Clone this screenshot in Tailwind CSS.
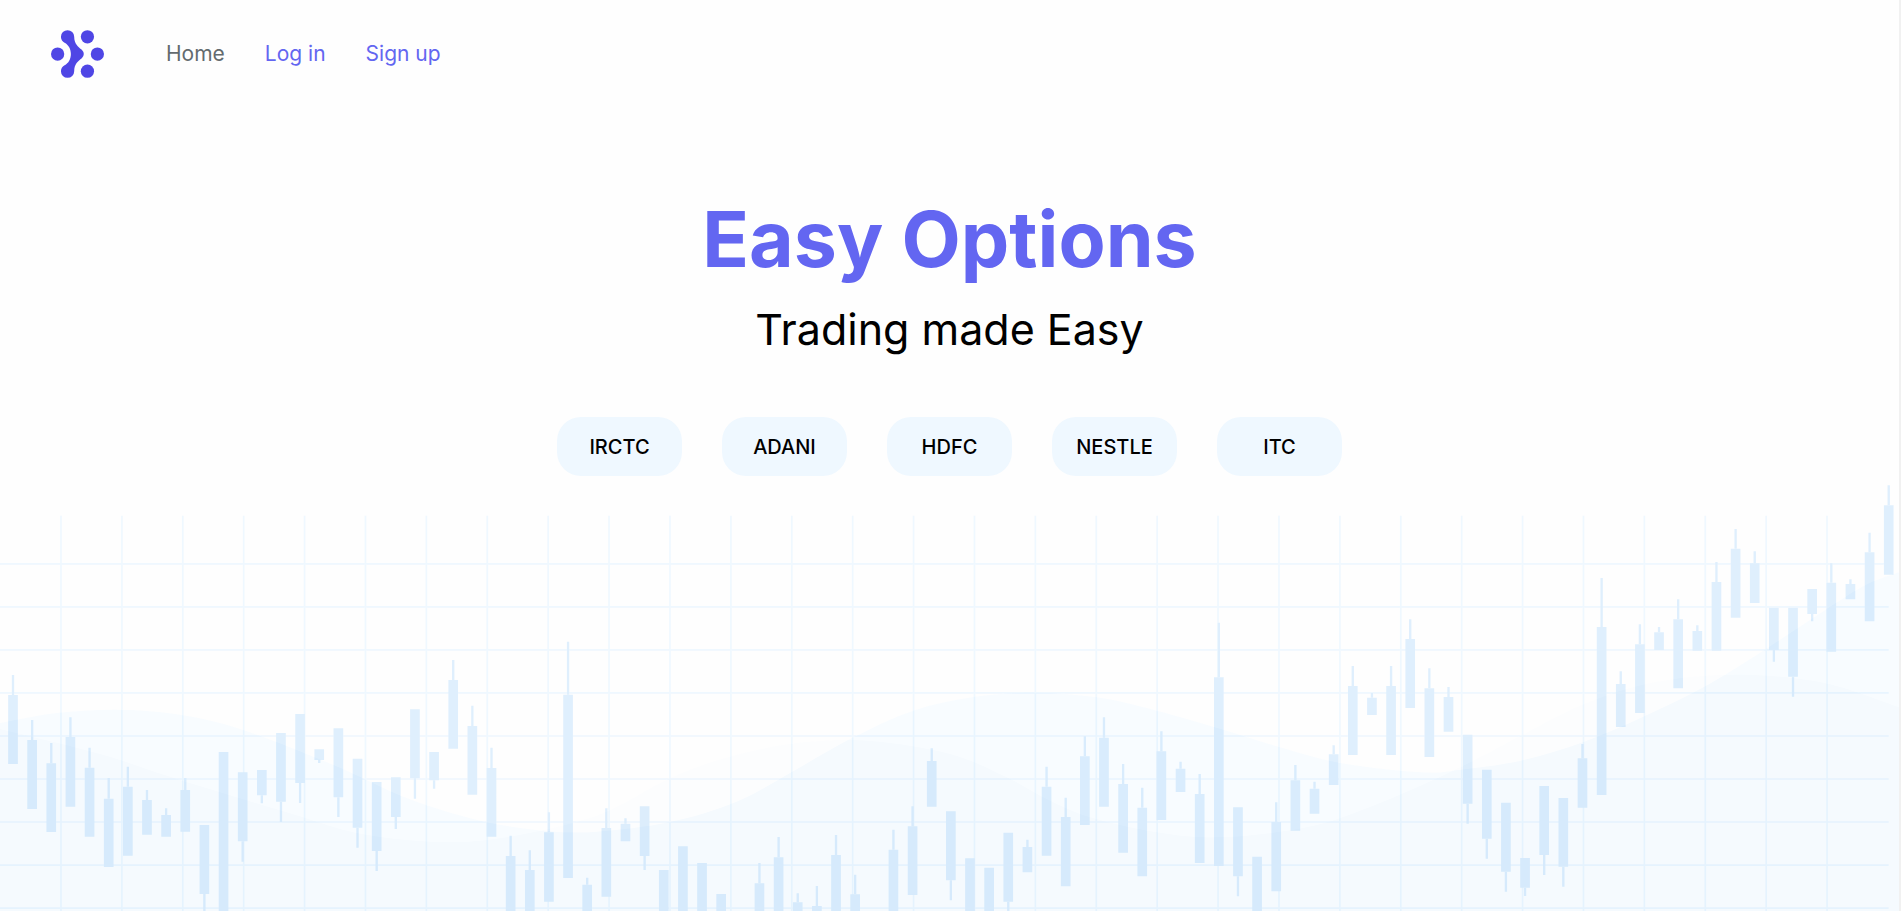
<!DOCTYPE html>
<html lang="en">
<head>
<meta charset="utf-8">
<meta name="viewport" content="width=device-width, initial-scale=1">
<title>Easy Options</title>
<script src="https://cdn.jsdelivr.net/npm/@tailwindcss/browser@4"></script>
</head>
<body class="bg-[#fefefe] font-[Inter,'Liberation_Sans',sans-serif] text-black">
<div class="relative isolate flex min-h-screen flex-col overflow-hidden border-r-2 border-[#f1f1f1]">

  <!-- Decorative candlestick chart -->
  <svg class="absolute bottom-0 left-0 -z-10 w-full" viewBox="0 3 5697 1293" fill="none" aria-hidden="true">
    <path id="grid" stroke="#e6f4ff" stroke-width="5" opacity=".65"/>
    <path id="wicks" stroke="#dfeffd" stroke-width="7"/>
    <path id="bodies" fill="#dfeffd"/>
    <path id="wave-back" class="mix-blend-multiply" fill="#fcfdfe"/>
    <path id="wave-front" class="mix-blend-multiply" fill="#f8fcff"/>
  </svg>

  <header class="flex items-center gap-[62px] px-[51px] pt-[30px]">
    <a href="#" aria-label="Easy Options">
      <svg class="h-12 w-[53px]" viewBox="154 90 160 144" fill="#4f46e5" aria-hidden="true">
        <circle cx="174" cy="162" r="20"/>
        <circle cx="264" cy="110" r="20"/>
        <circle cx="294" cy="162" r="20"/>
        <circle cx="264" cy="214" r="20"/>
        <path d="M184 110A20 20 0 0 1 224 110C224 131 236 141 247 149Q253 155 253 162Q253 169 247 175C236 183 224 193 224 214A20 20 0 0 1 184 214C184 205 189 199 195 196C207 190 214 177 214 162C214 147 207 134 195 128C189 125 184 119 184 110Z"/>
      </svg>
    </a>
    <nav class="flex items-center gap-10 text-[21px] leading-7">
      <a href="#" class="text-[#636b6f]">Home</a>
      <a href="#" class="text-[#6366f1]">Log in</a>
      <a href="#" class="text-[#6366f1]">Sign up</a>
    </nav>
  </header>

  <main class="flex flex-col items-center pt-[113px] text-center">
    <h1 class="text-[77px] leading-24 font-bold text-[#6366f1]">Easy Options</h1>
    <p class="pt-3 text-[43px] leading-15">Trading made Easy</p>
    <div class="flex flex-wrap justify-center gap-10 pt-[58px]">
      <button type="button" class="h-[59px] w-[125px] rounded-3xl bg-[#eff8ff] text-xl font-medium">IRCTC</button>
      <button type="button" class="h-[59px] w-[125px] rounded-3xl bg-[#eff8ff] text-xl font-medium">ADANI</button>
      <button type="button" class="h-[59px] w-[125px] rounded-3xl bg-[#eff8ff] text-xl font-medium">HDFC</button>
      <button type="button" class="h-[59px] w-[125px] rounded-3xl bg-[#eff8ff] text-xl font-medium">NESTLE</button>
      <button type="button" class="h-[59px] w-[125px] rounded-3xl bg-[#eff8ff] text-xl font-medium">ITC</button>
    </div>
  </main>
</div>

<script>
// Each candle: [high, body top, body bottom, low]; null leaves a gap.
const up = (h, t, b) => [h, t, b, b];
const dn = (t, b, l) => [t, t, b, l];
const E = 1300;
const candles = [
  up(588,648,855), up(723,783,990), up(792,853,1059), up(715,774,983), up(806,866,1073),
  up(897,959,1164), up(863,923,1130), up(933,963,1067), up(988,1008,1073), up(897,933,1058),
  dn(1038,1245,1305), dn(819,E,E), dn(880,1087,1148), dn(873,949,973), dn(762,968,1029),
  dn(705,912,972), dn(811,843,852), dn(748,955,1014), dn(839,1046,1106), dn(909,1116,1176),
  dn(895,1014,1050), dn(691,898,959), dn(819,904,929), up(543,603,809), up(680,741,947),
  up(806,867,1073), up(1070,1131,E), up(1114,1173,E), up(1000,1060,1268), up(488,647,1197),
  up(1196,1217,E), up(988,1047,1253), up(1018,1034,1087), dn(982,1131,1173), dn(1173,E,E),
  dn(1102,E,E), dn(1152,E,E), dn(1245,E,E), null, up(1152,1213,E),
  up(1074,1135,E), up(1243,1270,E), up(1221,1281,E), up(1068,1128,E), up(1187,1246,E),
  null, up(1052,1112,E), up(982,1042,1248), up(808,846,983), dn(997,1204,1264),
  dn(1138,E,E), dn(1166,E,E), dn(1061,1268,E), up(1082,1104,1180), up(863,923,1130),
  up(956,1014,1222), up(772,832,1038), up(715,776,983), up(855,915,1121), up(926,986,1192),
  up(757,817,1023), up(848,869,939), up(885,945,1152), up(431,595,1161), dn(985,1192,1252),
  dn(1133,E,E), up(970,1029,1237), up(858,904,1055), up(908,929,1004), up(799,826,918),
  up(561,621,828), up(642,656,708), up(561,621,828), up(421,480,687), up(568,628,834),
  up(624,654,758), dn(767,974,1034), dn(872,1079,1139), dn(971,1178,1238), dn(1137,1226,1251),
  dn(921,1128,1188), dn(957,1163,1223), up(795,838,986), up(297,444,948), up(577,615,744),
  up(436,496,702), up(444,460,513), up(361,421,628), up(439,456,515), up(249,309,515),
  up(150,209,416), up(217,253,372), dn(386,513,548), dn(386,593,653), dn(330,405,427),
  up(253,311,518), up(301,315,361), up(161,220,427), up(19,79,287)
];
let bodies = '', wicks = '';
candles.forEach((c, i) => {
  if (!c) return;
  const x = 39 + 57.42 * i;
  bodies += `M${x - 14.5} ${c[1]}h29V${c[2]}h-29Z`;
  if (c[0] < c[1]) wicks += `M${x} ${c[0]}V${c[1]}`;
  if (c[3] > c[2]) wicks += `M${x} ${c[2]}V${c[3]}`;
});
let grid = '';
for (let i = 0; i < 30; i++) grid += `M${183 + 182.7 * i} 110V1300`;
for (let i = 0; i < 9; i++) grid += `M0 ${254.5 + 129.1 * i}H5666`;

// Smooth curve through the points, closed along the bottom edge.
function wave(p) {
  let d = `M${p[0]}`;
  for (let i = 0; i < p.length - 1; i++) {
    const a = p[i - 1] || p[i], b = p[i], c = p[i + 1], e = p[i + 2] || c;
    d += `C${b[0] + (c[0] - a[0]) / 6} ${b[1] + (c[1] - a[1]) / 6} ${c[0] - (e[0] - b[0]) / 6} ${c[1] - (e[1] - b[1]) / 6} ${c[0]} ${c[1]}`;
  }
  return d + 'V1300H0Z';
}
const set = (id, d) => document.getElementById(id).setAttribute('d', d);
set('grid', grid);
set('wicks', wicks);
set('bodies', bodies);
set('wave-front', wave([[0,732],[170,702],[350,692],[530,706],[720,750],[1000,858],[1220,957],[1440,1025],[1640,1056],[1790,1058],[2010,1029],[2210,968],[2377,878],[2560,775],[2740,695],[2920,654],[3100,641],[3290,655],[3470,695],[3670,752],[3840,805],[4020,852],[4263,880],[4383,872],[4563,845],[4753,788],[4933,712],[5123,618],[5313,500],[5503,375],[5603,315],[5697,280]]));
set('wave-back', wave([[0,750],[300,825],[530,900],[860,1000],[1070,1062],[1290,1088],[1500,1078],[1790,1010],[2010,898],[2200,830],[2410,790],[2610,786],[2850,825],[3020,895],[3140,960],[3270,1015],[3470,1060],[3660,1075],[3920,1045],[4120,980],[4350,880],[4563,770],[4753,675],[4963,610],[5203,587],[5463,610],[5697,685]]));
</script>
</body>
</html>
